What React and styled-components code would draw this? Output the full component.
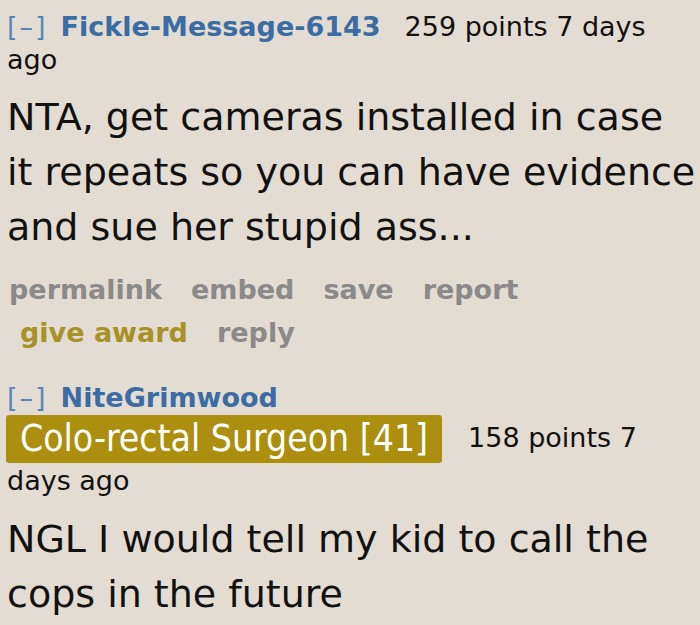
import React from "react";
import styled, { createGlobalStyle } from "styled-components";

const Global = createGlobalStyle`
  html, body { margin: 0; padding: 0; background: #e3dcd2; }
  body { font-family: "DejaVu Sans", Verdana, sans-serif; }
`;

const Page = styled.div`
  width: 700px;
  height: 625px;
  overflow: hidden;
  background: #e3dcd2;
  padding: 10px 0 0 7px;
  box-sizing: border-box;
`;

const Comment = styled.div`
  display: flex;
  flex-direction: column;
  margin-top: ${p => p.$mt || 0}px;
`;

const Tagline = styled.div`
  font-size: 27px;
  line-height: 33px;
  color: #111;
  padding-right: 6px;
`;

const Toggle = styled.span`
  color: #5a85b8;
  letter-spacing: 2px;
  margin-right: 13px;
`;

const Author = styled.span`
  color: #3b6ca3;
  font-weight: bold;
  margin-right: 24px;
`;

const Flair = styled.span`
  display: inline-block;
  vertical-align: middle;
  background: #ad8f10;
  color: #fff;
  border-radius: 3px;
  padding: 4px 14px 4px 14px;
  font-family: "DejaVu Sans Condensed", "DejaVu Sans", sans-serif;
  font-stretch: condensed;
  font-size: 37px;
  line-height: 40px;
  margin: 1px 26px 1px -1px;
`;

const Meta = styled.span`
  color: #111;
`;

const Body = styled.div`
  font-size: 38px;
  line-height: 55px;
  color: #111;
  margin-top: ${p => p.$mt}px;
`;

const Actions = styled.div`
  display: flex;
  flex-wrap: wrap;
  column-gap: 29px;
  font-size: 27px;
  font-weight: bold;
  line-height: 43px;
  margin-top: 13px;
  padding-left: 2px;
  padding-right: 6px;
`;

const Action = styled.span`
  color: ${p => (p.$gold ? "#a89126" : "#8a8a8a")};
  margin-left: ${p => p.$indent || 0}px;
`;

export default function App() {
  return (
    <Page>
      <Global />
      <Comment>
        <Tagline>
          <Toggle>[–]</Toggle>
          <Author>Fickle-Message-6143</Author>
          <Meta>259 points 7 days ago</Meta>
        </Tagline>
        <Body $mt={14}>
          NTA, get cameras installed in case it repeats so you can have evidence and sue her stupid ass...
        </Body>
        <Actions>
          <Action>permalink</Action>
          <Action>embed</Action>
          <Action>save</Action>
          <Action>report</Action>
          <Action $gold $indent={11}>give award</Action>
          <Action>reply</Action>
        </Actions>
      </Comment>
      <Comment $mt={27}>
        <Tagline>
          <Toggle>[–]</Toggle>
          <Author>NiteGrimwood</Author>
          <br />
          <Flair>Colo-rectal Surgeon [41]</Flair>
          <Meta>158 points 7 days ago</Meta>
        </Tagline>
        <Body $mt={15}>NGL I would tell my kid to call the cops in the future</Body>
      </Comment>
    </Page>
  );
}
